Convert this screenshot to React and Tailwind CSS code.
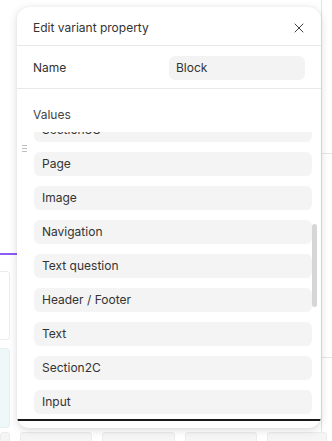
import { X } from "lucide-react";

const values = [
  "Section3C",
  "Page",
  "Image",
  "Navigation",
  "Text question",
  "Header / Footer",
  "Text",
  "Section2C",
  "Input",
];

function App() {
  return (
    <div
      className="relative w-[332px] h-[441px] overflow-hidden bg-white text-[#333]"
      style={{ fontFamily: "Inter, 'Noto Sans', sans-serif" }}
    >
      {/* background canvas */}
      <div className="absolute left-[321px] top-0 h-full w-px bg-[#e6e6e6]" />
      <div className="absolute left-[321px] top-[153px] w-[11px] h-px bg-[#e6e6e6]" />
      <div className="absolute left-[321px] top-[357px] w-[11px] h-px bg-[#e6e6e6]" />
      <div className="absolute left-0 top-[253px] w-[20px] h-[2px] bg-[#8b5cf6]" />
      <div className="absolute left-[-4px] top-[271px] w-[14px] h-[69px] border border-[#ececec] rounded-[3px]" />
      <div className="absolute left-[-4px] top-[348px] w-[14px] h-[80px] bg-[#eef8f8] border border-[#e6f0f0] rounded-[3px]" />
      <div className="absolute left-0 top-[432px] flex gap-[10px]">
        {[10, 72, 73, 72, 60].map((w, i) => (
          <div
            key={i}
            className="h-[20px] bg-[#f5f5f5] border border-[#ececec] rounded-[3px]"
            style={{ width: w }}
          />
        ))}
      </div>

      {/* modal */}
      <div className="absolute left-[17px] top-[7px] w-[304px] h-[421px] bg-white rounded-[12px] shadow-[0_2px_8px_rgba(0,0,0,0.15),0_0_1px_rgba(0,0,0,0.1)] flex flex-col overflow-hidden">
        <div className="h-[39px] flex items-center justify-between pl-4 pr-[14px] pt-[3px] border-b border-[#e8e8e8]">
          <span className="text-[12px]">Edit variant property</span>
          <X size={16} strokeWidth={1.3} className="text-[#222]" />
        </div>

        <div className="h-[43px] flex items-center justify-between pl-4 pr-4 pt-px border-b border-[#e8e8e8]">
          <span className="text-[12px]">Name</span>
          <div className="w-[136px] h-[24px] bg-[#f3f3f3] rounded-[6px] flex items-center px-[7px] text-[12px]">
            Block
          </div>
        </div>

        <div className="pl-4 pt-[17px] pb-[8px] text-[12px] text-[#444]">Values</div>

        <div className="relative h-[287px] overflow-hidden">
          <div className="absolute left-[5px] top-[13px] flex flex-col gap-[2px]">
            <div className="w-[5px] h-px bg-[#bdbdbd]" />
            <div className="w-[5px] h-px bg-[#bdbdbd]" />
            <div className="w-[5px] h-px bg-[#bdbdbd]" />
          </div>
          <div className="mt-[-14px] pl-[17px] pr-[9px] flex flex-col gap-[10px]">
            {values.map((v) => (
              <div
                key={v}
                className="h-[24px] bg-[#f4f4f4] rounded-[6px] flex items-center px-[8px] text-[12px]"
              >
                {v}
              </div>
            ))}
          </div>
          <div className="absolute right-[4px] top-[92px] w-[5px] h-[83px] bg-[#d6d6d6] rounded-full" />
        </div>

        <div className="h-[2px] bg-[#1a1a1a]" />
      </div>
    </div>
  );
}

export default App;
